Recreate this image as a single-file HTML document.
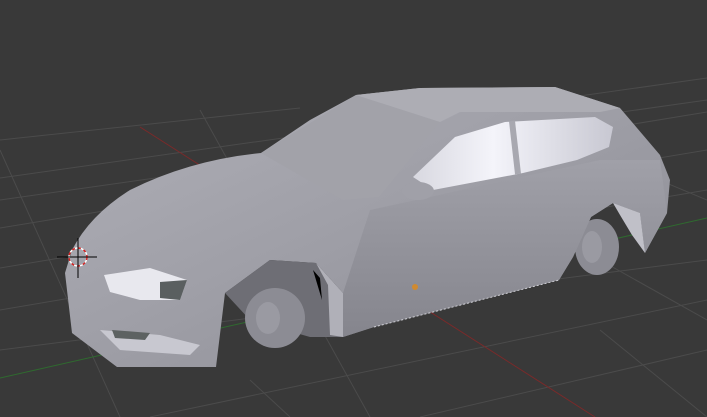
<!DOCTYPE html>
<html><head><style>html,body{margin:0;padding:0;background:#393939;overflow:hidden}svg{display:block}</style></head>
<body>
<svg width="707" height="417" viewBox="0 0 707 417" xmlns="http://www.w3.org/2000/svg">
<defs>
<linearGradient id="body" x1="0" y1="0" x2="1" y2="1">
<stop offset="0" stop-color="#b0b0b8"/><stop offset="0.5" stop-color="#9e9ea6"/><stop offset="1" stop-color="#8a8a92"/>
</linearGradient>
<linearGradient id="win" x1="0" y1="0" x2="1" y2="0">
<stop offset="0" stop-color="#d8d8e0"/><stop offset="0.4" stop-color="#f4f4fa"/><stop offset="1" stop-color="#c8c8d2"/>
</linearGradient>
<linearGradient id="side" x1="0" y1="0" x2="0" y2="1">
<stop offset="0" stop-color="#a0a0a8"/><stop offset="1" stop-color="#85858d"/>
</linearGradient>
</defs>
<g stroke="#4b4b4b" stroke-width="1" fill="none">
<line x1="0" y1="140" x2="300" y2="108"/><line x1="0" y1="178" x2="707" y2="78"/>
<line x1="0" y1="228" x2="707" y2="112"/><line x1="0" y1="268" x2="707" y2="150"/>
<line x1="0" y1="310" x2="707" y2="190"/><line x1="0" y1="350" x2="707" y2="260"/>
<line x1="150" y1="417" x2="707" y2="300"/><line x1="420" y1="417" x2="707" y2="350"/>
<line x1="0" y1="200" x2="707" y2="100"/>
<line x1="0" y1="150" x2="120" y2="417"/><line x1="200" y1="110" x2="370" y2="417"/>
<line x1="480" y1="105" x2="707" y2="200"/><line x1="600" y1="260" x2="707" y2="320"/>
<line x1="600" y1="330" x2="707" y2="417"/><line x1="250" y1="380" x2="290" y2="417"/>
</g>
<line x1="140" y1="127" x2="595" y2="417" stroke="#7a2a2a" stroke-width="1"/>
<line x1="0" y1="378" x2="707" y2="218" stroke="#2f6a2f" stroke-width="1"/>
<ellipse cx="597" cy="247" rx="22" ry="28" fill="#8c8c94"/>
<ellipse cx="592" cy="247" rx="10" ry="16" fill="#9a9aa2"/>
<path d="M65,273 L72,250 Q90,215 130,190 Q190,160 261,153 L310,120 L356,95 L420,88 L555,87 L620,108 L660,155 L670,180 L667,213 L645,253 L640,213 L613,203 L591,217 L573,257 L559,280 L374,327 L343,337 L343,293 L316,263 L270,260 L225,293 L216,367 L117,367 L72,333 Z" fill="url(#body)"/>
<path d="M343,293 L370,210 L600,160 L660,160 L667,213 L645,253 L640,213 L613,203 L591,217 L573,257 L559,280 L374,327 L343,337 Z" fill="url(#side)"/>
<path d="M261,153 L356,95 L440,122 L379,197 L343,200 Z" fill="#a2a2a9"/>
<path d="M356,95 L420,88 L555,87 L620,108 L600,112 L460,112 L440,122 Z" fill="#adadb4"/>
<path d="M413,177 L455,137 L505,122 L595,117 L613,127 L609,147 L577,160 L523,173 L433,190 Z" fill="url(#win)"/>
<line x1="512" y1="121" x2="518" y2="174" stroke="#a8a8b0" stroke-width="6"/>
<ellipse cx="418" cy="191" rx="16" ry="9" fill="#a0a0a8"/>
<path d="M225,293 L270,260 L316,263 L343,293 L343,337 L310,337 L250,320 Z" fill="#6e6e75"/>
<ellipse cx="275" cy="318" rx="30" ry="30" fill="#8c8c94"/>
<ellipse cx="268" cy="318" rx="12" ry="16" fill="#9a9aa2"/>
<path d="M316,263 L343,293 L343,337 L330,335 L328,285 Z" fill="#b0b0b8"/>
<path d="M313,270 L320,278 L322,300 Z" fill="#000"/>
<path d="M613,203 L640,213 L645,253 L632,235 L620,215 Z" fill="#c0c0c8"/>
<path d="M104,275 L150,268 L187,280 L180,300 L140,300 L110,292 Z" fill="#e8e8ee"/>
<path d="M160,282 L187,280 L180,300 L160,298 Z" fill="#5a5f60"/>
<path d="M100,330 L160,335 L200,345 L190,355 L120,350 Z" fill="#c8c8d0"/>
<path d="M112,330 L150,333 L145,340 L115,338 Z" fill="#5d6262"/>
<line x1="374" y1="327" x2="559" y2="280" stroke="#d0d0d6" stroke-width="1" stroke-dasharray="2,2"/>
<circle cx="415" cy="287" r="3" fill="#d08a30"/>
<circle cx="78" cy="257" r="9" fill="none" stroke="#fff" stroke-width="1.5"/>
<circle cx="78" cy="257" r="9" fill="none" stroke="#d02020" stroke-width="1.5" stroke-dasharray="3,3"/>
<line x1="57" y1="257" x2="97" y2="257" stroke="#000" stroke-width="1"/>
<line x1="78" y1="238" x2="78" y2="278" stroke="#000" stroke-width="1"/>
</svg>
</body></html>
